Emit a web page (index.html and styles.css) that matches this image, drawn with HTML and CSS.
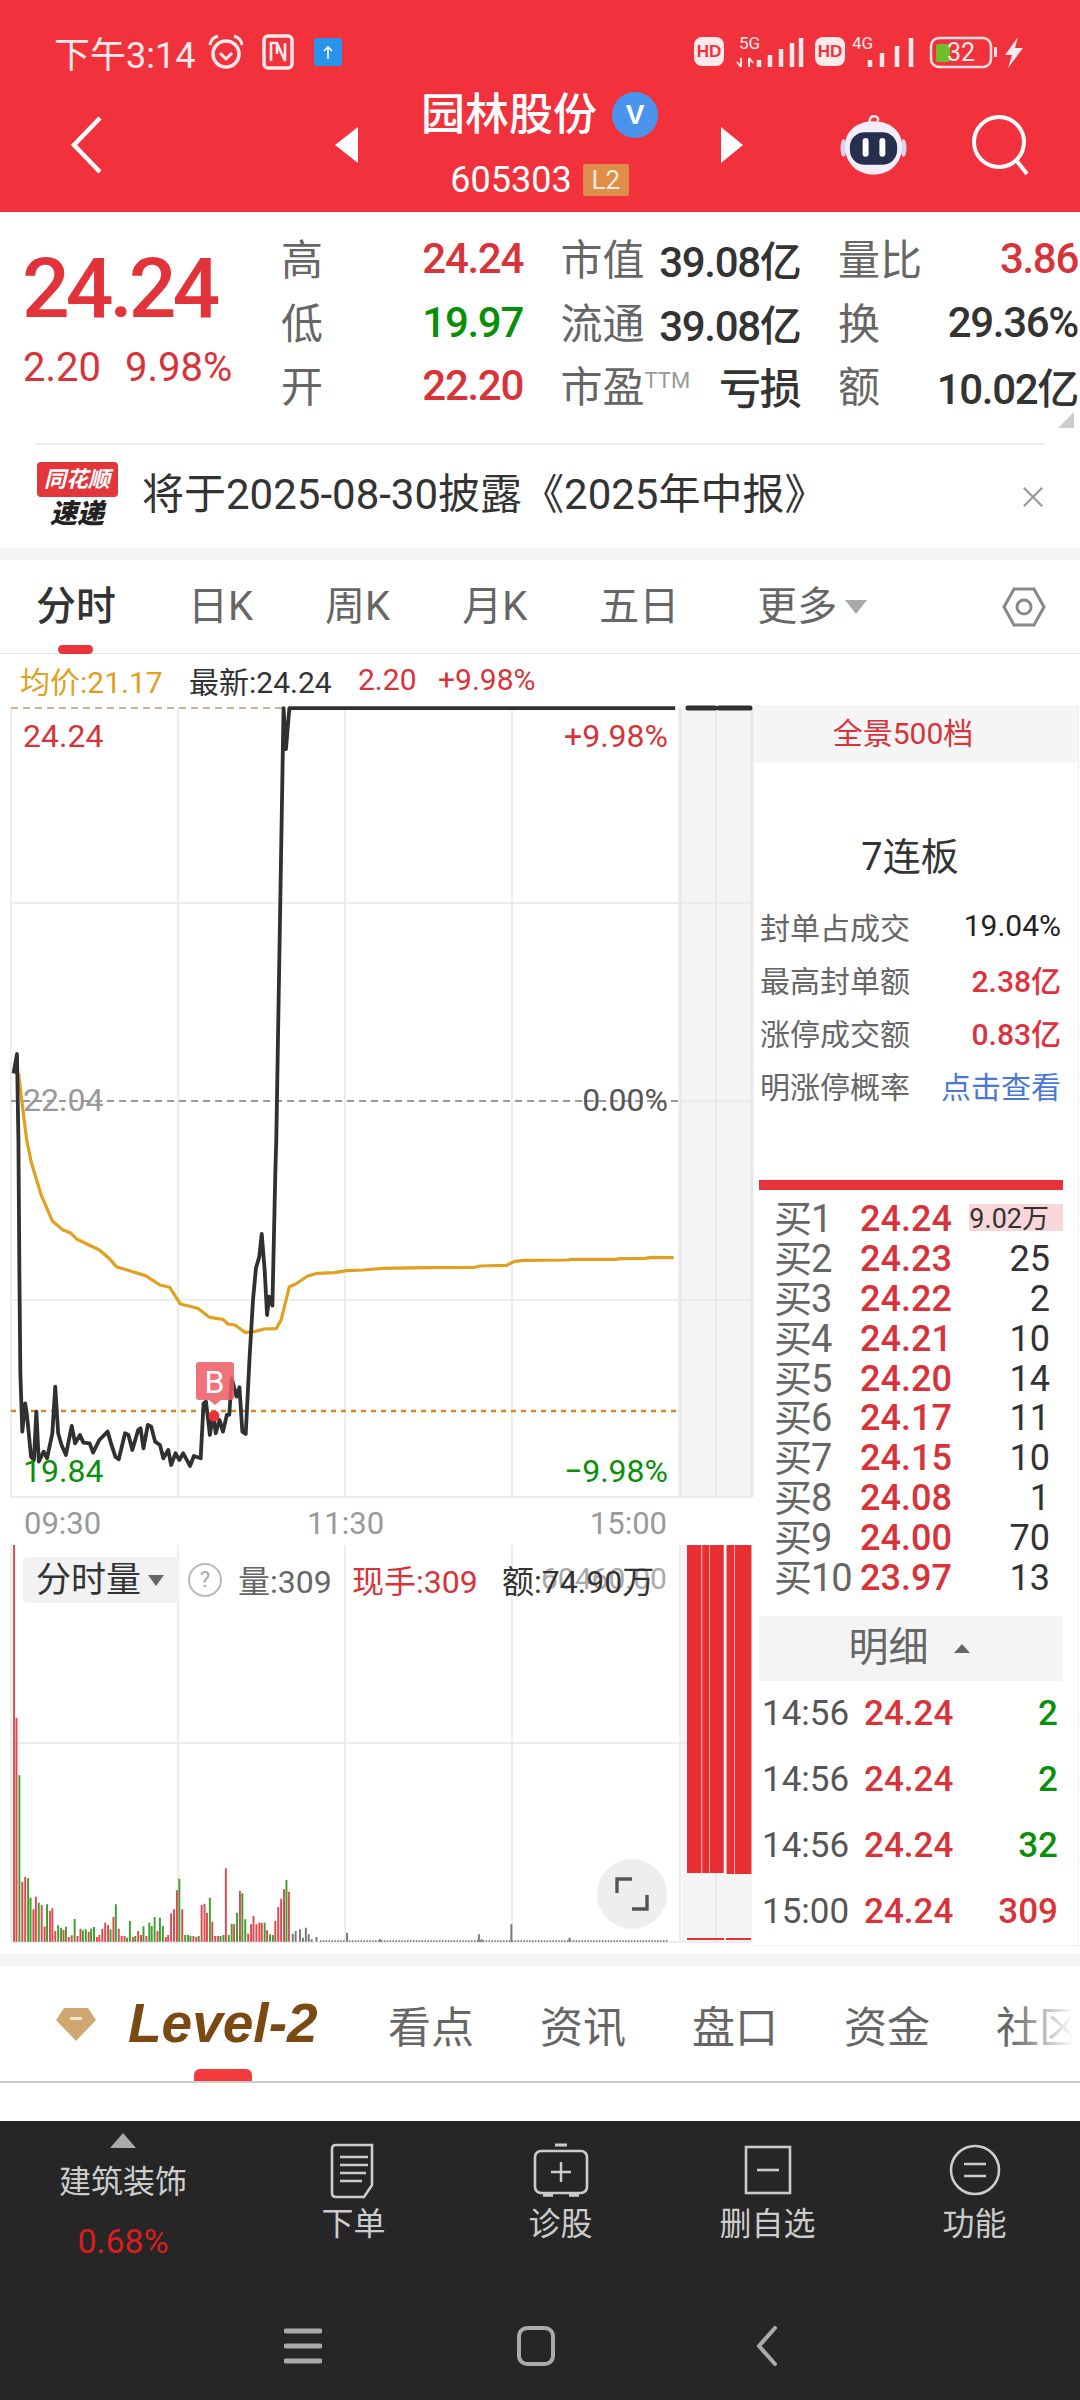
FILE: index.html
```html
<!DOCTYPE html>
<html lang="zh">
<head>
<meta charset="utf-8">
<title>园林股份</title>
<link rel="stylesheet" href="styles.css">
</head>
<body>
<div class="page">
  <header class="top">
    <div class="status">
      <span class="clock">下午3:14</span>
      <svg class="st-alarm" viewBox="0 0 38 38"><circle cx="19" cy="21" r="13" fill="none" stroke="#ffe9ea" stroke-width="3.5"/><path d="M13 20l6 6 6-6" fill="none" stroke="#ffe9ea" stroke-width="3"/><path d="M3 12Q4 5 11 3M35 12Q34 5 27 3" fill="none" stroke="#ffe9ea" stroke-width="3"/></svg>
      <svg class="st-nfc" viewBox="0 0 32 36"><rect x="2" y="2" width="28" height="32" rx="4" fill="none" stroke="#ffe9ea" stroke-width="3.5"/><path d="M9 27V9H15L23 27V9M15 9V20" fill="none" stroke="#ffe9ea" stroke-width="2.6"/></svg>
      <svg class="st-up" viewBox="0 0 28 28"><rect width="28" height="28" rx="2" fill="#2a94ea"/><path d="M14 21V9M10 13l4-4 4 4" fill="none" stroke="#fff" stroke-width="1.6"/></svg>
      <svg class="st-right" viewBox="690 32 335 40">
        <rect x="692" y="37" width="30" height="29" rx="8" fill="#ffe9ea"/><text x="707" y="57" class="st-hd">HD</text>
        <text x="737" y="49" class="st-g">5G</text>
        <path d="M739 58v9M735 62l4 5M747 67v-9M751 63l-4-5" stroke="#ffe9ea" stroke-width="2" fill="none"/>
        <path d="M757 60v7M768 55v12M779 49v18M790 43v24M799 38v29" stroke="#ffe9ea" stroke-width="4.5" fill="none"/>
        <rect x="813" y="37" width="30" height="29" rx="8" fill="#ffe9ea"/><text x="828" y="57" class="st-hd">HD</text>
        <text x="850" y="49" class="st-g">4G</text>
        <path d="M868 60v7M880 53v14M895 46v21M909 38v29" stroke="#ffe9ea" stroke-width="4.5" fill="none"/>
        <rect x="929" y="38" width="60" height="29" rx="8" fill="none" stroke="#ffe0e0" stroke-width="2.5"/>
        <rect x="934" y="44" width="14" height="18" rx="2" fill="#6fbf2c"/>
        <text x="959" y="61" class="st-bat">32</text>
        <rect x="992" y="47" width="3" height="10" fill="#ffe0e0"/>
        <path d="M1016 37l-13 18h7l-4 13 15-20h-8z" fill="#ffe9ea"/>
      </svg>
    </div>
    <div class="nav">
      <svg class="nav-back" viewBox="0 0 32 58"><path d="M30 2L4 29l26 27" fill="none" stroke="#fff" stroke-width="4.5"/></svg>
      <i class="tri-left"></i>
      <div class="title-block">
        <div class="title-row"><span class="title">园林股份</span><span class="vbadge">V</span></div>
        <div class="code-row"><span class="code">605303</span><span class="l2">L2</span></div>
      </div>
      <i class="tri-right"></i>
      <svg class="robot" viewBox="0 0 68 62">
        <path d="M30 8Q30 1 36 2Q40 3 38 7" fill="none" stroke="#f5e6f0" stroke-width="2.5"/>
        <ellipse cx="3.5" cy="34" rx="3" ry="9" fill="#d9d3f2"/><ellipse cx="64.5" cy="34" rx="3" ry="9" fill="#d9d3f2"/>
        <path d="M34 7C52 7 63 18 63 32C63 50 50 61 34 61C18 61 5 50 5 32C5 18 16 7 34 7Z" fill="#f2eef9"/>
        <rect x="10" y="18" width="48" height="33" rx="15" fill="#26304e"/>
        <rect x="23" y="24" width="6" height="19" rx="3" fill="#fff"/><rect x="40" y="24" width="6" height="19" rx="3" fill="#fff"/>
      </svg>
      <svg class="search" viewBox="0 0 60 62"><circle cx="29" cy="28" r="25" fill="none" stroke="#fff" stroke-width="4"/><path d="M46 46l11 14" stroke="#fff" stroke-width="4" fill="none"/></svg>
    </div>
  </header>

  <section class="quote">
    <div class="price-box">
      <div class="big-price">24.24</div>
      <div class="big-change"><span>2.20</span><span>9.98%</span></div>
    </div>
    <div class="stats">
      <div class="stat"><span class="lab">高</span><span class="red">24.24</span></div>
      <div class="stat"><span class="lab">市值</span><span class="dark">39.08亿</span></div>
      <div class="stat"><span class="lab">量比</span><span class="red">3.86</span></div>
      <div class="stat"><span class="lab">低</span><span class="green">19.97</span></div>
      <div class="stat"><span class="lab">流通</span><span class="dark">39.08亿</span></div>
      <div class="stat"><span class="lab">换</span><span class="dark">29.36%</span></div>
      <div class="stat"><span class="lab">开</span><span class="red">22.20</span></div>
      <div class="stat"><span class="lab">市盈<sup class="ttm">TTM</sup></span><span class="dark loss">亏损</span></div>
      <div class="stat"><span class="lab">额</span><span class="dark">10.02亿</span></div>
    </div>
    <i class="corner"></i>
  </section>

  <section class="notice">
    <div class="ths-logo"><span class="ths-top">同花顺</span><span class="ths-bot">速递</span></div>
    <span class="notice-text">将于2025-08-30披露《2025年中报》</span>
    <svg class="notice-x" viewBox="0 0 24 24"><path d="M2 2l20 20M22 2L2 22" stroke="#999" stroke-width="2.4"/></svg>
  </section>

  <div class="band band-a"></div>

  <nav class="ktabs">
    <span class="ktab on">分时</span><span class="ktab">日K</span><span class="ktab">周K</span><span class="ktab">月K</span><span class="ktab">五日</span>
    <span class="ktab more">更多</span><i class="more-tri"></i>
    <svg class="hex" viewBox="0 0 44 44"><path d="M12 4h20l10 18-10 18H12L2 22z" fill="none" stroke="#888" stroke-width="3"/><circle cx="22" cy="22" r="7" fill="none" stroke="#888" stroke-width="3"/></svg>
  </nav>

  <div class="legend">
    <span class="l-avg">均价:21.17</span><span class="l-new">最新:24.24</span><span class="l-red">2.20</span><span class="l-pct">+9.98%</span>
  </div>

  <div class="market">
    <div class="charts">
      <div class="price-chart">
        <svg class="fill" viewBox="0 705 754 793">
          <rect x="680" y="705" width="72" height="792" fill="#f5f5f5"/>
          <g class="grid">
            <path d="M178 708V1497M345 708V1497M512 708V1497M716 708V1497"/>
            <path d="M11 903H752M11 1300H752M11 1497H752M680 1101H752"/>
            <path d="M11 708V1497"/>
            <path class="thick" d="M680 708V1497M752 708V1497"/>
          </g>
          <path d="M11 708H285" stroke="#cdb48a" stroke-width="2" stroke-dasharray="7 5" fill="none"/>
          <path d="M11 1101H678" stroke="#999" stroke-width="2" stroke-dasharray="7 5" fill="none"/>
          <path d="M11 1411H679" stroke="#d9822b" stroke-width="2.4" stroke-dasharray="5 5" fill="none"/>
          <g transform="translate(0,1140) scale(.4847,.3333)">
            <path class="avg-line" d="M38 -201L55 0L65 70L85 165L108 243L130 270L145 278L158 297L205 330L225 355L240 380L300 407L330 435L350 442L372 492L408 505L432 532L460 538L470 552L485 555L505 577L525 575L545 567L570 566L580 540L597 440L610 432L635 408L655 400L690 398L715 392L750 390L790 385L880 383L980 382L990 378L1045 376L1060 365L1080 361L1170 360L1180 358L1270 358L1280 356L1330 355L1345 352L1390 353"/>
            <path class="px-line" d="M28 -200L35 -258L38 0L40 400L42 700L46 875L52 790L56 830L64 950L70 960L75 815L80 965L90 935L97 955L108 880L114 740L120 880L127 915L136 945L148 858L155 910L165 885L172 908L185 910L192 938L205 900L222 875L230 915L238 950L245 958L258 880L265 885L273 930L285 870L290 865L296 925L305 855L312 860L320 905L330 915L337 955L347 930L353 975L362 940L370 960L378 940L392 978L400 948L414 955L420 790L425 785L433 885L440 820L445 880L453 840L460 875L468 825L473 825L478 715L488 770L494 742L500 875L507 882L515 650L522 480L528 385L535 350L540 282L546 390L551 525L555 470L562 497L568 100L570 0L585 -1296L590 -1173L597 -1296L1393 -1296"/>
          </g>
          <path class="px-cap" d="M688 708H715M719 708H750"/>
          <circle cx="214" cy="1416" r="5.5" fill="#e8333a"/>
          <path d="M199 1362h32q3 0 3 3v32q0 3-3 3h-10l-6 5-6-5h-10q-3 0-3-3v-32q0-3 3-3z" fill="#ec5a60" fill-opacity=".85"/>
          <text x="214.500" y="1393" class="c-b">B</text>
          <text x="23" y="747" class="c-lab c-red">24.24</text>
          <text x="668" y="747" class="c-lab c-red c-end">+9.98%</text>
          <text x="23" y="1111" class="c-lab c-gray">22.04</text>
          <text x="668" y="1111" class="c-lab c-mid c-end">0.00%</text>
          <text x="23" y="1482" class="c-lab c-green">19.84</text>
          <text x="668" y="1482" class="c-lab c-green c-end">−9.98%</text>
        </svg>
      </div>
      <div class="time-axis"><span>09:30</span><span>11:30</span><span>15:00</span></div>
      <div class="vol-chart">
        <svg class="fill" viewBox="0 1544 754 398">
          <rect x="682" y="1544" width="70" height="397" fill="#f5f5f5"/>
          <g class="grid">
            <path d="M178 1544V1941M345 1544V1941M512 1544V1941M716 1544V1941"/>
            <path d="M11 1742H690M11 1941H752"/>
            <path d="M11 1544V1941M680 1544V1941"/>
          </g>
          <path d="M687 1544H701.400V1872H687zM702.200 1544H709.200V1872H702.200zM709.800 1544H723.700V1872H709.800zM726.600 1544H734.400V1873H726.600zM735 1544H751.400V1873H735z" fill="#e83034"/>
          <path d="M687 1938H724M726 1938H751" stroke="#e83034" stroke-width="2"/>
          <g transform="translate(0,1530) scale(.4847,.3333)">
            <path class="b-r" d="M29 1232V42M34 1232V560M46 1232V1052M52 1232V1038M69 1232V1135M74 1232V1097M86 1232V1122M92 1232V1187M103 1232V1140M108 1232V1132M114 1232V1200M131 1232V1197M142 1232V1218M148 1232V1213M160 1232V1215M166 1232V1193M183 1232V1203M200 1232V1218M205 1232V1212M211 1232V1193M217 1232V1175M223 1232V1182M234 1232V1158M245 1232V1193M251 1232V1215M257 1232V1215M274 1232V1218M285 1232V1200M291 1232V1212M302 1232V1215M325 1232V1200M342 1232V1218M347 1232V1212M353 1232V1147M359 1232V1135M365 1232V1078M376 1232V1135M399 1232V1215M405 1232V1218M416 1232V1122M422 1232V1118M427 1232V1145M438 1232V1172M444 1232V1215M450 1232V1215M466 1232V1012M483 1232V1180M495 1232V1080M512 1232V1208M518 1232V1180M523 1232V1155M529 1232V1180M535 1232V1175M540 1232V1175M551 1232V1198M568 1232V1170M574 1232V1128M580 1232V1103M586 1232V1075M596 1232V1082"/>
            <path class="b-g" d="M40 1232V733M58 1232V1042M63 1232V1100M80 1232V1115M97 1232V1120M120 1232V1183M126 1232V1190M136 1232V1187M154 1232V1164M171 1232V1198M177 1232V1195M188 1232V1193M194 1232V1188M228 1232V1195M239 1232V1120M262 1232V1220M268 1232V1170M279 1232V1215M296 1232V1186M308 1232V1175M313 1232V1185M319 1232V1158M330 1232V1160M336 1232V1185M370 1232V1043M382 1232V1212M388 1232V1212M393 1232V1214M410 1232V1215M433 1232V1100M455 1232V1215M461 1232V1212M472 1232V1212M478 1232V1178M489 1232V1145M500 1232V1087M506 1232V1165M546 1232V1175M557 1232V1210M563 1232V1212M591 1232V1047"/>
            <path class="b-k" d="M604 1232V1208M610 1232V1200M619 1232V1195M625 1232V1220M631 1232V1190M637 1232V1210M643 1232V1225M653 1232V1218M716 1232V1205M784 1232V1225M988 1232V1210M994 1232V1225M1055 1232V1180M1175 1232V1220"/>
            <path class="b-dots" d="M660 1230H1378"/>
          </g>
        </svg>
        <span class="ghost">60460.00</span>
        <div class="vol-legend">
          <span class="vol-sel">分时量<i class="sel-tri"></i></span>
          <span class="help">?</span>
          <span class="v-gray">量:309</span>
          <span class="v-red">现手:309</span>
          <span class="v-dark">额:74.90万</span>
        </div>
        <div class="expand"><svg viewBox="0 0 36 36"><path d="M18 3H3V17M18 33H33V19" fill="none" stroke="#555" stroke-width="3.4"/></svg></div>
      </div>
    </div>

    <aside class="panel">
      <div class="panel-head">全景500档</div>
      <div class="limit-title">7连板</div>
      <div class="limit-row"><span>封单占成交</span><span class="lv-dark">19.04%</span></div>
      <div class="limit-row"><span>最高封单额</span><span class="lv-red">2.38亿</span></div>
      <div class="limit-row"><span>涨停成交额</span><span class="lv-red">0.83亿</span></div>
      <div class="limit-row"><span>明涨停概率</span><span class="lv-blue">点击查看</span></div>
      <div class="red-bar"></div>
      <div class="book">
        <div class="bk first"><i class="bk-bar"></i><span class="bk-l">买1</span><span class="bk-p">24.24</span><span class="bk-q small">9.02万</span></div>
        <div class="bk"><span class="bk-l">买2</span><span class="bk-p">24.23</span><span class="bk-q">25</span></div>
        <div class="bk"><span class="bk-l">买3</span><span class="bk-p">24.22</span><span class="bk-q">2</span></div>
        <div class="bk"><span class="bk-l">买4</span><span class="bk-p">24.21</span><span class="bk-q">10</span></div>
        <div class="bk"><span class="bk-l">买5</span><span class="bk-p">24.20</span><span class="bk-q">14</span></div>
        <div class="bk"><span class="bk-l">买6</span><span class="bk-p">24.17</span><span class="bk-q">11</span></div>
        <div class="bk"><span class="bk-l">买7</span><span class="bk-p">24.15</span><span class="bk-q">10</span></div>
        <div class="bk"><span class="bk-l">买8</span><span class="bk-p">24.08</span><span class="bk-q">1</span></div>
        <div class="bk"><span class="bk-l">买9</span><span class="bk-p">24.00</span><span class="bk-q">70</span></div>
        <div class="bk"><span class="bk-l">买10</span><span class="bk-p">23.97</span><span class="bk-q">13</span></div>
      </div>
      <div class="detail-head"><span>明细</span><i class="up-tri"></i></div>
      <div class="dt"><span class="dt-t">14:56</span><span class="dt-p">24.24</span><span class="dt-g">2</span></div>
      <div class="dt"><span class="dt-t">14:56</span><span class="dt-p">24.24</span><span class="dt-g">2</span></div>
      <div class="dt"><span class="dt-t">14:56</span><span class="dt-p">24.24</span><span class="dt-g">32</span></div>
      <div class="dt"><span class="dt-t">15:00</span><span class="dt-p">24.24</span><span class="dt-r">309</span></div>
    </aside>
  </div>

  <div class="band band-b"></div>

  <nav class="info-tabs">
    <svg class="gem" viewBox="0 0 40 34"><path d="M8 1h24l8 12-20 21L0 13z" fill="#cfa76f"/><rect x="14" y="10" width="12" height="3" fill="#f3e6cf"/></svg>
    <span class="lv2">Level-2</span>
    <span class="itab">看点</span><span class="itab">资讯</span><span class="itab">盘口</span><span class="itab">资金</span><span class="itab">社区</span>
    <i class="fade"></i>
  </nav>
  <div class="white-gap"></div>

  <footer class="bottom">
    <div class="tools">
      <div class="sector"><i class="sector-tri"></i><span class="sector-name">建筑装饰</span><span class="sector-pct">0.68%</span></div>
      <div class="tool">
        <svg viewBox="0 0 60 56"><path d="M12 2H48V42L40 54H12Q8 54 8 50V6Q8 2 12 2Z" fill="none" stroke="#ccc" stroke-width="2.6"/><path d="M16 14H44M16 22H44M16 30H42M16 38H38" stroke="#ccc" stroke-width="2.4"/></svg>
        <span>下单</span>
      </div>
      <div class="tool">
        <svg viewBox="0 0 60 56"><path d="M24 2H36" stroke="#ccc" stroke-width="3"/><rect x="4" y="8" width="52" height="42" rx="6" fill="none" stroke="#ccc" stroke-width="2.6"/><path d="M30 19V39M20 29H40" stroke="#ccc" stroke-width="2.4"/><path d="M12 52H22M38 52H48" stroke="#ccc" stroke-width="3.4"/></svg>
        <span>诊股</span>
      </div>
      <div class="tool">
        <svg viewBox="0 0 60 56"><rect x="8" y="4" width="44" height="46" fill="none" stroke="#ccc" stroke-width="2.6"/><path d="M19 27H41" stroke="#ccc" stroke-width="2.6"/></svg>
        <span>删自选</span>
      </div>
      <div class="tool">
        <svg viewBox="0 0 60 56"><circle cx="30" cy="27" r="24" fill="none" stroke="#ccc" stroke-width="2.6"/><path d="M19 21H41M19 33H41" stroke="#ccc" stroke-width="2.6"/></svg>
        <span>功能</span>
      </div>
    </div>
    <div class="sysnav">
      <span class="sys"><svg viewBox="0 0 38 36"><path d="M2 3H36M2 18H36M2 33H36" stroke="#aaa" stroke-width="5" stroke-linecap="round"/></svg></span>
      <span class="sys"><svg viewBox="0 0 38 40"><rect x="2" y="2" width="34" height="36" rx="8" fill="none" stroke="#aaa" stroke-width="4"/></svg></span>
      <span class="sys"><svg viewBox="0 0 38 40"><path d="M25 2L9 20l16 18" fill="none" stroke="#aaa" stroke-width="4" stroke-linecap="round"/></svg></span>
    </div>
  </footer>
</div>
</body>
</html>
```
FILE: styles.css
```css
* { box-sizing: border-box; }
html, body { margin: 0; padding: 0; background: #fff; }
body { font-family: Roboto, "Noto Sans CJK SC", sans-serif; color: #333; }
i { display: block; font-style: normal; }
.page { width: 1080px; height: 2400px; overflow: hidden; display: flex; flex-direction: column; }

/* header */
.top { height: 212px; background: #f1323c; color: #fff; flex: none; padding-top: 22px; }
.status { height: 60px; display: flex; align-items: center; padding-left: 54px; }
.clock { font-size: 36px; color: #ffe9ea; width: 154px; white-space: nowrap; }
.st-alarm { width: 38px; height: 38px; margin-left: -1px; }
.st-nfc { width: 32px; height: 36px; margin-left: 17px; }
.st-up { width: 28px; height: 28px; margin-left: 20px; }
.st-right { width: 335px; height: 40px; margin-left: 350px; flex: none; }
.st-hd { font: 700 17px "Liberation Sans", sans-serif; fill: #f1323c; text-anchor: middle; }
.st-g { font: 400 17px Roboto, sans-serif; fill: #ffe9ea; }
.st-bat { font: 400 25px Roboto, sans-serif; fill: #ffe9ea; text-anchor: middle; }
.nav { height: 130px; display: flex; align-items: center; padding: 0 0 4px 70px; }
.nav-back { width: 32px; height: 58px; flex: none; }
.tri-left { margin-left: 233px; width: 0; height: 0; border-style: solid; border-width: 18px 23px 18px 0; border-color: transparent #fff transparent transparent; }
.tri-right { width: 0; height: 0; border-style: solid; border-width: 18px 0 18px 22px; border-color: transparent transparent transparent #fff; }
.title-block { width: 363px; align-self: flex-start; display: flex; flex-direction: column; align-items: center; }
.title-row { height: 66px; display: flex; align-items: center; }
.title { font-size: 44px; font-weight: 500; line-height: 66px; }
.vbadge { width: 46px; height: 46px; border-radius: 50%; margin-left: 15px; background: #4a94ee; color: #fff; font: 700 28px/46px "Liberation Sans", sans-serif; text-align: center; }
.code-row { margin-top: 12px; height: 40px; display: flex; align-items: center; }
.code { font-size: 36px; line-height: 40px; }
.l2 { width: 46px; height: 32px; margin-left: 11px; background: #e08c4a; color: #ffeedd; font-size: 26px; line-height: 32px; text-align: center; border-radius: 2px; }
.robot { width: 67px; height: 62px; margin-left: 97px; flex: none; }
.search { width: 60px; height: 62px; margin-left: 63px; flex: none; }

/* quote */
.quote { position: relative; height: 231px; flex: none; display: flex; padding-top: 13px; }
.price-box { width: 281px; padding-left: 22px; }
.big-price { font-size: 84px; font-weight: 500; color: #e2323a; line-height: 96px; letter-spacing: -4px; margin-top: 16px; padding-left: 0; }
.big-change { font-size: 40px; line-height: 50px; color: #d9333a; display: flex; gap: 24px; margin-top: 6px; padding-left: 1px; }
.stats { width: 797px; display: grid; grid-template-columns: 242px 240px 240px; column-gap: 37.500px; grid-auto-rows: 63.500px; }
.stat { display: flex; justify-content: space-between; align-items: center; font-size: 42px; white-space: nowrap; }
.stat > span:last-child { letter-spacing: -1.300px; font-weight: 500; padding-top: 4px; }
.lab { color: #666; position: relative; }
.red { color: #d9333a; }
.green { color: #0a8f0a; }
.dark { color: #333; }
.ttm { font-size: 22px; color: #999; vertical-align: 14px; line-height: 0; }
.corner { position: absolute; left: 1058px; top: 200px; width: 0; height: 0; border-style: solid; border-width: 0 0 16px 16px; border-color: transparent transparent #ccc transparent; }

/* notice */
.notice { height: 105px; flex: none; margin: 0 35px; border-top: 2px solid #eeeeee; display: flex; align-items: center; }
.ths-logo { width: 82px; height: 70px; margin: 0 0 0 1px; display: flex; flex-direction: column; align-items: center; flex: none; }
.ths-top { width: 81px; height: 35px; background: #e4353a; border-radius: 4px; color: #fff; font-size: 22px; font-weight: 700; font-style: italic; line-height: 35px; text-align: center; white-space: nowrap; }
.ths-bot { font-size: 27px; line-height: 35px; font-weight: 900; font-style: italic; color: #222; }
.notice-text { font-size: 42px; line-height: 50px; color: #333; margin-left: 24px; padding-bottom: 4px; white-space: nowrap; flex: 1; }
.notice-x { width: 22px; height: 22px; margin-right: 1px; flex: none; }

.band { background: #f5f5f5; flex: none; }
.band-a { height: 12px; }
.band-b { height: 12px; margin-top: 8px; }

/* kline tabs */
.ktabs { height: 94px; flex: none; position: relative; display: flex; align-items: center; padding: 0 0 0 36px; gap: 72px; border-bottom: 1px solid #e6e6e6; }
.ktab { font-size: 40px; color: #666; line-height: 50px; white-space: nowrap; }
.ktab.more { margin-left: 6px; }
.ktab.on { color: #333; font-weight: 500; position: relative; }
.ktab.on::after { content: ""; position: absolute; left: 22px; top: 63px; width: 35px; height: 9px; border-radius: 5px; background: #e8333a; }
.more-tri { width: 0; height: 0; margin: 0 0 0 -64px; border-style: solid; border-width: 14px 11px 0 11px; border-color: #aaa transparent transparent transparent; }
.hex { width: 44px; height: 44px; position: absolute; left: 1002px; top: 25px; }

/* legend */
.legend { height: 51px; flex: none; display: flex; align-items: center; padding-left: 20px; font-size: 30px; white-space: nowrap; }
.l-avg { color: #e0a020; width: 169px; }
.l-new { color: #333; width: 169px; }
.l-red { color: #d9333a; width: 80px; }
.l-pct { color: #d9333a; }

/* market */
.market { display: flex; height: 1241px; flex: none; }
.charts { width: 754px; flex: none; display: flex; flex-direction: column; }
.price-chart { height: 793px; flex: none; position: relative; }
.fill { display: block; width: 100%; height: 100%; }
.grid path { stroke: #e8e8e8; stroke-width: 1.500; fill: none; }
.grid path.thick { stroke-width: 3; }
.avg-line { fill: none; stroke: #e0a020; stroke-width: 3.200; vector-effect: non-scaling-stroke; stroke-linejoin: round; }
.px-line { fill: none; stroke: #303030; stroke-width: 3.800; vector-effect: non-scaling-stroke; stroke-linejoin: round; }
.px-cap { fill: none; stroke: #303030; stroke-width: 5; stroke-linecap: round; }
.c-b { font: 400 32px Roboto, sans-serif; fill: #fff; text-anchor: middle; }
.c-lab { font: 400 32px Roboto, sans-serif; }
.c-end { text-anchor: end; }
.c-red { fill: #d9333a; }
.c-gray { fill: #999; }
.c-mid { fill: #555; }
.c-green { fill: #0a8f0a; }
.time-axis { height: 47px; flex: none; display: flex; justify-content: space-between; align-items: center; padding: 4px 87px 0 24px; font-size: 31px; color: #999; }
.vol-chart { height: 398px; flex: none; position: relative; }
.b-r { fill: none; stroke: #dc4a50; stroke-width: 4; }
.b-g { fill: none; stroke: #3f9e2e; stroke-width: 4; }
.b-k { fill: none; stroke: #777; stroke-width: 4; }
.b-dots { fill: none; stroke: #888; stroke-width: 6; stroke-dasharray: 3 3; }
.ghost { position: absolute; left: 541px; top: 16px; font-size: 30px; color: #aaa; white-space: nowrap; }
.vol-legend { position: absolute; left: 23px; top: 12px; display: flex; align-items: center; font-size: 32px; line-height: 46px; white-space: nowrap; height: 46px; }
.vol-sel { width: 156px; height: 46px; background: #f2f2f2; border-radius: 5px; font-size: 35px; line-height: 48px; padding-left: 13px; color: #333; position: relative; }
.sel-tri { position: absolute; left: 125px; top: 18px; width: 0; height: 0; border-style: solid; border-width: 11px 8px 0 8px; border-color: #666 transparent transparent transparent; }
.help { width: 34px; height: 34px; margin-left: 9px; border: 2.500px solid #bbb; border-radius: 50%; color: #aaa; font-size: 22px; line-height: 29px; text-align: center; }
.v-gray { color: #666; margin-left: 16px; width: 114px; padding-top: 3px; }
.v-red { color: #d9333a; width: 150px; padding-top: 3px; }
.v-dark { color: #333; padding-top: 3px; }
.expand { position: absolute; left: 597px; top: 314px; width: 70px; height: 70px; border-radius: 50%; background: #eeeeee; display: flex; align-items: center; justify-content: center; }
.expand svg { width: 36px; height: 36px; }

/* panel */
.panel { width: 325px; flex: none; border-right: 1px solid #eee; border-bottom: 1px solid #eee; }
.panel-head { height: 58px; background: #f5f5f5; color: #d9333a; font-size: 30px; line-height: 58px; text-align: center; padding-right: 26px; }
.limit-title { margin: 64px 0 12px; height: 60px; line-height: 60px; font-size: 38px; color: #333; text-align: center; padding-right: 12px; }
.limit-row { height: 53px; display: flex; justify-content: space-between; align-items: center; padding: 0 17px 0 6px; font-size: 30px; color: #666; white-space: nowrap; }
.lv-dark { color: #222; }
.lv-red { color: #e0313c; font-weight: 500; }
.lv-blue { color: #4a78d8; }
.red-bar { height: 10px; margin: 69px 15px 9px 5px; background: #e8333a; }
.book { margin: 0 15px 18px 5px; }
.bk { position: relative; height: 39.900px; display: grid; grid-template-columns: 86px 1fr auto; align-items: center; padding: 0 13px 0 15px; white-space: nowrap; line-height: 40px; }
.bk-bar { position: absolute; right: 0; top: 5px; width: 94px; height: 27px; background: #f9d6d8; }
.bk-l { font-size: 38px; color: #666; letter-spacing: -1px; position: relative; }
.bk-p { font-size: 36px; color: #d9333a; font-weight: 500; position: relative; }
.bk-q { font-size: 36px; color: #333; position: relative; }
.bk-q.small { font-size: 27px; margin-right: 1px; }
.detail-head { height: 65px; margin: 0 15px 0 5px; background: #f4f4f4; display: flex; align-items: center; justify-content: center; font-size: 40px; line-height: 1; color: #666; gap: 25px; padding-right: 4px; }
.up-tri { width: 0; height: 0; border-style: solid; border-width: 0 8px 9px 8px; border-color: transparent transparent #666 transparent; }
.dt { height: 66px; display: grid; grid-template-columns: 102px 1fr auto; align-items: center; padding: 0 20px 0 8px; font-size: 35px; line-height: 40px; white-space: nowrap; }
.dt-t { color: #555; }
.dt-p { color: #d9333a; font-weight: 500; }
.dt-g { color: #0a8f0a; font-weight: 500; }
.dt-r { color: #d9333a; font-weight: 500; }

/* info tabs */
.info-tabs { height: 117px; flex: none; position: relative; overflow: hidden; display: flex; align-items: center; padding-left: 56px; border-bottom: 2px solid #ccc; }
.gem { width: 40px; height: 34px; flex: none; }
.lv2 { margin-left: 32px; width: 260px; flex: none; font: italic 700 55px/1 "Liberation Sans", sans-serif; color: #7a4a12; position: relative; white-space: nowrap; }
.lv2::after { content: ""; position: absolute; left: 66px; top: 73px; width: 58px; height: 12px; border-radius: 6px 6px 0 0; background: #f33a3c; }
.itab { font-size: 43px; color: #666; width: 86px; margin-right: 66px; flex: none; white-space: nowrap; }
.fade { position: absolute; left: 1010px; top: 0; width: 70px; height: 100%; background: linear-gradient(to right, rgba(255,255,255,0), #fff 90%); }
.white-gap { height: 38px; flex: none; }

/* bottom */
.bottom { flex: 1; background: #262626; display: flex; flex-direction: column; }
.tools { height: 190px; display: grid; grid-template-columns: 250px repeat(4, 207px); flex: none; }
.sector { display: flex; flex-direction: column; align-items: center; padding: 12px 4px 0 0; }
.sector-tri { width: 0; height: 0; border-style: solid; border-width: 0 13px 15px 13px; border-color: transparent transparent #aaa transparent; }
.sector-name { font-size: 32px; color: #ccc; height: 44px; line-height: 44px; margin-top: 12px; white-space: nowrap; }
.sector-pct { font-size: 34px; color: #d81e1e; height: 40px; line-height: 40px; margin-top: 17px; }
.tool { display: flex; flex-direction: column; align-items: center; padding-top: 22px; font-size: 32px; color: #ccc; }
.tool svg { width: 60px; height: 56px; flex: none; }
.tool span { height: 40px; line-height: 40px; margin-top: 5px; white-space: nowrap; }
.sysnav { display: flex; justify-content: center; align-items: center; height: 50px; padding-right: 8px; margin-top: 10px; }
.sys { width: 233px; display: flex; justify-content: center; }
.sys svg { width: 38px; height: 40px; }
```
